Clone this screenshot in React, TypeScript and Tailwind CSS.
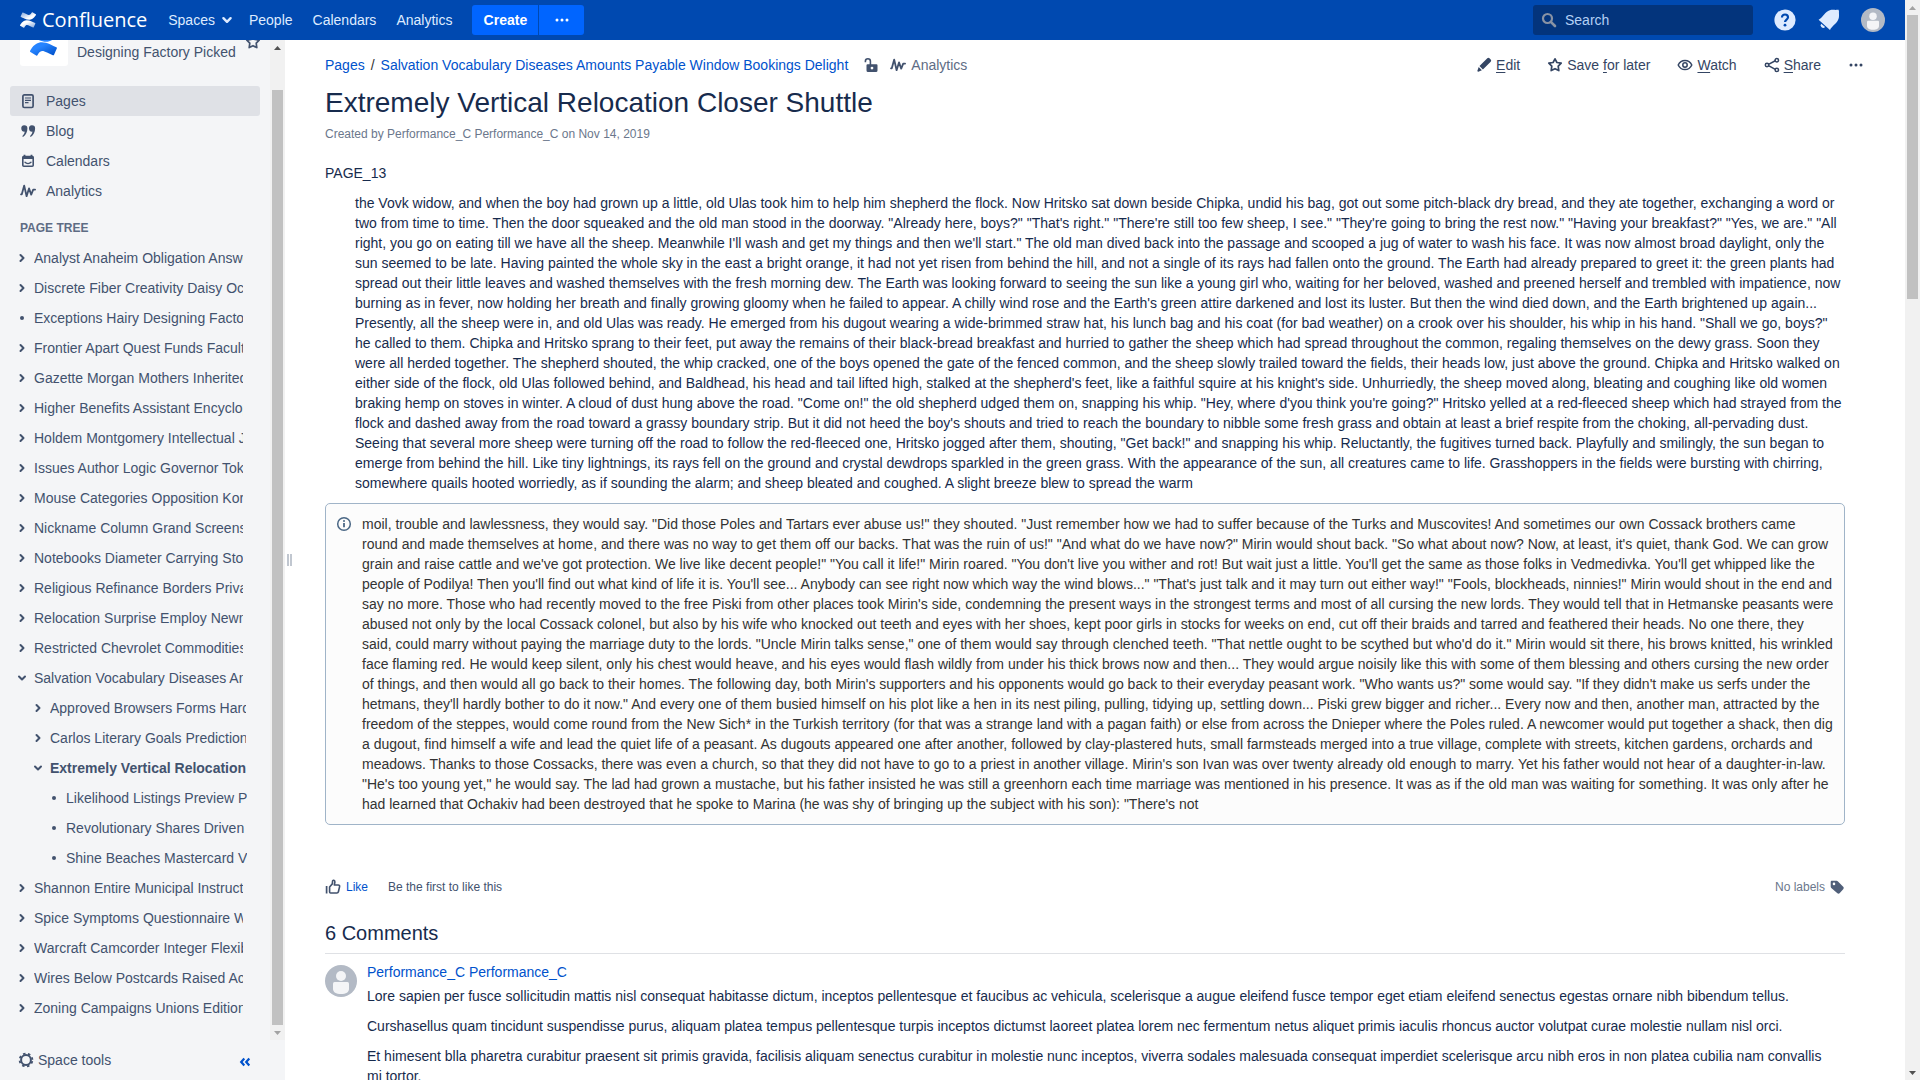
import React from "react";

const LOGO_BOTTOM =
  "M.87 18.257c-.248.382-.53.875-.763 1.245a.764.764 0 0 0 .255 1.04l4.965 3.054a.764.764 0 0 0 1.058-.26c.199-.332.454-.763.733-1.221 1.967-3.247 3.945-2.853 7.508-1.146l4.957 2.337a.764.764 0 0 0 1.028-.382l2.364-5.346a.764.764 0 0 0-.382-1 599.851 599.851 0 0 1-4.965-2.361C10.911 10.97 5.224 11.185.87 18.257z";
const LOGO_TOP =
  "M23.131 5.743c.249-.405.531-.875.764-1.25a.764.764 0 0 0-.256-1.034L18.675.404a.764.764 0 0 0-1.058.26c-.195.335-.451.763-.734 1.225-1.966 3.246-3.945 2.85-7.508 1.146L4.437.694a.764.764 0 0 0-1.027.382L1.046 6.422a.764.764 0 0 0 .382 1c1.039.49 3.104 1.467 4.965 2.361 6.698 3.246 12.392 3.029 16.738-4.04z";

function Logo({ id, from, to, className }: { id: string; from: string; to: string; className: string }) {
  return (
    <svg viewBox="0 0 24 24" className={className} aria-hidden="true">
      <defs>
        <linearGradient id={id + "a"} x1="1" y1="1" x2="0.2" y2="0.2">
          <stop offset="0.1" stopColor={from} />
          <stop offset="0.8" stopColor={to} />
        </linearGradient>
        <linearGradient id={id + "b"} x1="0" y1="0" x2="0.8" y2="0.8">
          <stop offset="0.1" stopColor={from} />
          <stop offset="0.8" stopColor={to} />
        </linearGradient>
      </defs>
      <path d={LOGO_BOTTOM} fill={`url(#${id}a)`} />
      <path d={LOGO_TOP} fill={`url(#${id}b)`} />
    </svg>
  );
}

type IconProps = { className?: string };

function Icon({ className = "size-4", children }: IconProps & { children: React.ReactNode }) {
  return (
    <svg viewBox="0 0 16 16" fill="none" stroke="currentColor" className={`shrink-0 ${className}`} aria-hidden="true">
      {children}
    </svg>
  );
}

const AnalyticsIcon = (p: IconProps) => (
  <Icon {...p}>
    <path d="M1 11.3h.8L4.2 2.6 6.6 13.2 9 5.4l2.2 6.2 2-5h1.9" strokeWidth="1.8" strokeLinejoin="round" strokeLinecap="round" />
  </Icon>
);
const PageIcon = () => (
  <Icon>
    <rect x="2.9" y="1.9" width="10.2" height="12.6" rx="1.4" strokeWidth="1.7" />
    <path d="M5 5h6M5 7.3h6M5 9.6h3.5" strokeWidth="1.2" />
  </Icon>
);
const BlogIcon = () => (
  <Icon>
    <path
      d="M4.2 2.2a3.2 3.2 0 0 1 3.2 3.3c0 3.4-1.6 6.6-4.1 8.2-.7.3-1.2-.5-.7-1 1.3-1.2 2-2.6 2.2-4.1A3.2 3.2 0 1 1 4.2 2.2zM11.9 2.2a3.2 3.2 0 0 1 3.2 3.3c0 3.4-1.6 6.6-4.1 8.2-.7.3-1.2-.5-.7-1 1.3-1.2 2-2.6 2.2-4.1A3.2 3.2 0 1 1 11.9 2.2z"
      fill="currentColor"
      stroke="none"
    />
  </Icon>
);
const CalendarIcon = () => (
  <Icon>
    <rect x="2.8" y="3.5" width="10.4" height="9.7" rx="1" strokeWidth="1.6" />
    <path d="M2.5 4.8h11" strokeWidth="2.4" />
    <path d="M4.5 1.8v2M11.5 1.8v2" strokeWidth="1.8" />
    <path d="M5 9.3c1.5 1.7 4.5 1.7 6 0" strokeWidth="1.3" strokeLinecap="round" />
  </Icon>
);
const StarIcon = (p: IconProps) => (
  <Icon {...p}>
    <path
      d="M8 1.8l1.9 3.7 4.3.7-3 3 .6 4.4L8 11.7l-3.8 1.9.6-4.4-3-3 4.3-.7z"
      strokeWidth="1.7"
      strokeLinejoin="round"
    />
  </Icon>
);
const PencilIcon = () => (
  <Icon>
    <path d="M10.3 2.2l1-.9a1.6 1.6 0 0 1 2.2 0l1.2 1.2a1.6 1.6 0 0 1 0 2.2L6.9 12.5 3.500 9zM2.700 10l3.200 3.200-3.600 1.500c-.6.2-1.100-.3-.9-.9z" fill="currentColor" stroke="none" />
  </Icon>
);
const EyeIcon = () => (
  <Icon>
    <path d="M1.2 8C2.6 5 5.1 3.4 8 3.4S13.4 5 14.8 8c-1.4 3-3.900 4.600-6.800 4.600S2.600 11 1.200 8z" strokeWidth="1.5" strokeLinejoin="round" />
    <circle cx="8" cy="8" r="2.2" strokeWidth="1.5" />
  </Icon>
);
const ShareIcon = () => (
  <Icon>
    <path d="M4.5 7.4l6.8-3.7M4.5 8.6l6.8 3.8" strokeWidth="1.6" />
    <circle cx="3" cy="8" r="1.7" strokeWidth="1.5" />
    <circle cx="12.8" cy="3.2" r="1.7" strokeWidth="1.5" />
    <circle cx="12.8" cy="12.9" r="1.7" strokeWidth="1.5" />
  </Icon>
);
const MoreIcon = () => (
  <Icon>
    <g fill="currentColor" stroke="none">
      <circle cx="3" cy="8" r="1.5" />
      <circle cx="8" cy="8" r="1.5" />
      <circle cx="13" cy="8" r="1.5" />
    </g>
  </Icon>
);
const UnlockIcon = () => (
  <Icon>
    <path fillRule="evenodd" d="M4.5 7.2h9a1 1 0 0 1 1 1v5.3a1.5 1.5 0 0 1-1.5 1.5H5a1.5 1.5 0 0 1-1.5-1.5V8.2a1 1 0 0 1 1-1zM9 9.7a1.4 1.4 0 1 0 0 2.8 1.4 1.4 0 0 0 0-2.8z" fill="currentColor" stroke="none" />
    <path d="M2.4 5.3V4.2a2.5 2.5 0 0 1 5 0V8" strokeWidth="1.6" />
  </Icon>
);
const SearchIcon = () => (
  <Icon>
    <circle cx="6.5" cy="6.5" r="4.5" strokeWidth="2.2" />
    <path d="M9.8 9.8l4.2 4.2" strokeWidth="2.6" strokeLinecap="round" />
  </Icon>
);
const LikeIcon = () => (
  <Icon>
    <path d="M1.6 7v7.5" strokeWidth="1.7" />
    <path d="M4.6 13V8l2.7-3.1.3-3c.1-1 2.3-.9 2.3 1.1L9.3 6h4c1 0 1.5.7 1.3 1.6l-1.2 5.2c-.2.8-.7 1.2-1.5 1.2H5.6a1 1 0 0 1-1-1z" strokeWidth="1.6" strokeLinejoin="round" />
  </Icon>
);
const TagIcon = () => (
  <Icon>
    <path fillRule="evenodd" d="M2.8 1.8h4.8c.5 0 1 .2 1.4.6l5.2 5.4c.7.7.7 1.7 0 2.4l-3.4 3.9c-.7.7-1.7.7-2.4.1L2.3 8.9a2 2 0 0 1-.6-1.4V2.9c0-.6.5-1.1 1.1-1.1zM5 3.6a1.3 1.3 0 1 0 0 2.6 1.3 1.3 0 0 0 0-2.6z" fill="currentColor" stroke="none" />
  </Icon>
);
const InfoIcon = () => (
  <Icon>
    <circle cx="8" cy="8" r="6.3" strokeWidth="1.5" />
    <path d="M8 7v4.2" strokeWidth="1.8" />
    <circle cx="8" cy="4.9" r="1" fill="currentColor" stroke="none" />
  </Icon>
);
const GearIcon = () => (
  <Icon>
    <circle cx="8" cy="8" r="4.9" strokeWidth="2" />
    <circle cx="8" cy="8" r="6.4" strokeWidth="1.8" strokeDasharray="2.5 2.526" strokeDashoffset="3.8" />
  </Icon>
);
const CollapseIcon = () => (
  <Icon>
    <path d="M7.3 4.5L4.2 8l3.1 3.5M12.300 4.500L9.200 8l3.100 3.500" strokeWidth="2.2" />
  </Icon>
);

function Chevron({ open, className = "size-2.5" }: { open?: boolean; className?: string }) {
  return (
    <svg viewBox="0 0 10 10" fill="none" stroke="currentColor" strokeWidth="2" strokeLinecap="round" strokeLinejoin="round" className={`shrink-0 ${className}`} aria-hidden="true">
      <path d={open ? "M2 3.5l3 3 3-3" : "M3.5 2l3 3-3 3"} />
    </svg>
  );
}

function Avatar({ className }: { className: string }) {
  return (
    <svg viewBox="0 0 32 32" className={`shrink-0 ${className}`} role="img" aria-label="Performance_C">
      <circle cx="16" cy="16" r="16" fill="#b3bac5" />
      <circle cx="16" cy="11" r="5" fill="#f4f5f7" />
      <path d="M8 18.5a1.5 1.5 0 0 1 1.5-1.5h13a1.5 1.5 0 0 1 1.5 1.5V24c0 3-3 5-8 5s-8-2-8-5z" fill="#f4f5f7" />
    </svg>
  );
}

function Scrollbar({ thumb, upOn, downOn }: { thumb: string; upOn: boolean; downOn: boolean }) {
  return (
    <div className="flex w-[15px] shrink-0 flex-col bg-[#f1f1f1]" aria-hidden="true">
      <svg viewBox="0 0 15 15" className="size-[15px] shrink-0" fill={upOn ? "#505050" : "#a3a3a3"}>
        <path d="M7.5 6L11 10H4z" />
      </svg>
      <div className="flex min-h-0 flex-1 flex-col px-[2px]">
        <div className={`bg-[#c1c1c1] ${thumb}`} />
      </div>
      <svg viewBox="0 0 15 15" className="size-[15px] shrink-0" fill={downOn ? "#505050" : "#a3a3a3"}>
        <path d="M7.5 10L4 6h7z" />
      </svg>
    </div>
  );
}

function TopBar() {
  return (
    <header className="flex h-10 shrink-0 items-center bg-[#0049b0] pl-5 pr-5 text-[#deebff]">
      <a href="#home" className="flex items-center gap-1.5 text-white">
        <Logo id="top" from="#8fb0e0" to="#ffffff" className="size-4" />
        <span className="font-['Open_Sans',sans-serif] text-[20px] leading-10">Confluence</span>
      </a>
      <nav className="ml-[21px] flex items-center gap-5">
        <a href="#spaces" className="flex items-center gap-1.5">
          Spaces
          <Chevron open className="size-3" />
        </a>
        <a href="#people" className="-ml-1">People</a>
        <a href="#calendars">Calendars</a>
        <a href="#analytics">Analytics</a>
      </nav>
      <div className="ml-5 flex gap-px">
        <button className="h-[30px] w-[66px] rounded-l-[3px] bg-[#0065ff] font-bold text-white">Create</button>
        <button className="flex h-[30px] w-[45px] items-center justify-center rounded-r-[3px] bg-[#0065ff] text-white" aria-label="More create options">
          <MoreIcon />
        </button>
      </div>
      <label className="ml-auto flex h-[30px] w-[220px] items-center gap-2 rounded-[3px] bg-[#03347c] px-2 text-[#8993a4]">
        <SearchIcon />
        <input type="text" aria-label="Search" placeholder="Search" className="w-full min-w-0 bg-transparent outline-none placeholder:text-[#b3d0f5]" />
      </label>
      <div className="ml-5 flex items-center gap-5">
        <button aria-label="Help">
          <svg viewBox="0 0 24 24" className="size-6">
            <circle cx="12" cy="12" r="10.6" fill="#deebff" />
            <path d="M9 9.4c0-1.8 1.3-2.9 3-2.9s3 1.1 3 2.7c0 2.3-3 2.4-3 4.9" fill="none" stroke="#0049b0" strokeWidth="2.2" />
            <circle cx="12" cy="17.2" r="1.4" fill="#0049b0" />
          </svg>
        </button>
        <button aria-label="Notifications">
          <svg viewBox="0 0 24 24" className="size-6" fill="#deebff">
            <path d="M1.6 11.7C6 9.5 8 3 13.5 1.9c2.5-.5 5 .3 6.5-.1h1.600l.4 1.700c-.3 1.500.4 4-.2 6.400-1.200 5.300-6.600 7.300-8.800 12z" />
            <path d="M4.2 15.8a2.4 2.4 0 1 0 3.9 3.2z" />
          </svg>
        </button>
        <button aria-label="Your profile"><Avatar className="size-6" /></button>
      </div>
    </header>
  );
}

type Node = { t: string; l?: number; open?: boolean; leaf?: boolean; current?: boolean };

const TREE: Node[] = [
  { t: "Analyst Anaheim Obligation Answers" },
  { t: "Discrete Fiber Creativity Daisy Occasional" },
  { t: "Exceptions Hairy Designing Factory Picked", leaf: true },
  { t: "Frontier Apart Quest Funds Faculty" },
  { t: "Gazette Morgan Mothers Inherited" },
  { t: "Higher Benefits Assistant Encyclopedia" },
  { t: "Holdem Montgomery Intellectual Jungle" },
  { t: "Issues Author Logic Governor Tokyo" },
  { t: "Mouse Categories Opposition Korean" },
  { t: "Nickname Column Grand Screenshots" },
  { t: "Notebooks Diameter Carrying Stories" },
  { t: "Religious Refinance Borders Private" },
  { t: "Relocation Surprise Employ Newman" },
  { t: "Restricted Chevrolet Commodities" },
  { t: "Salvation Vocabulary Diseases Amounts", open: true },
  { t: "Approved Browsers Forms Hardware", l: 1 },
  { t: "Carlos Literary Goals Predictions", l: 1 },
  { t: "Extremely Vertical Relocation Closer", l: 1, open: true, current: true },
  { t: "Likelihood Listings Preview Payment", l: 2, leaf: true },
  { t: "Revolutionary Shares Driven Mail", l: 2, leaf: true },
  { t: "Shine Beaches Mastercard Visa", l: 2, leaf: true },
  { t: "Shannon Entire Municipal Instruct" },
  { t: "Spice Symptoms Questionnaire With" },
  { t: "Warcraft Camcorder Integer Flexible" },
  { t: "Wires Below Postcards Raised Acids" },
  { t: "Zoning Campaigns Unions Editions" },
];

const INDENT = ["pl-[17px] pr-[27px]", "pl-[33px] pr-6", "pl-[49px] pr-[23px]"];

function SideBar() {
  const links = [
    { t: "Pages", icon: <PageIcon />, on: true },
    { t: "Blog", icon: <BlogIcon /> },
    { t: "Calendars", icon: <CalendarIcon /> },
    { t: "Analytics", icon: <AnalyticsIcon /> },
  ];
  return (
    <aside className="flex w-[285px] shrink-0 flex-col bg-[#f4f5f7] text-[#42526e]">
      <div className="flex min-h-0 flex-1">
        <div className="min-w-0 flex-1 overflow-hidden">
          <div className="-mt-[22px] flex h-12 items-center gap-[9px] pl-5">
            <div className="flex size-12 shrink-0 items-center justify-center rounded-[3px] bg-white">
              <Logo id="side" from="#0052cc" to="#2684ff" className="size-7" />
            </div>
            <a href="#space" className="mt-5 whitespace-nowrap leading-5">Designing Factory Picked</a>
            <button aria-label="Favourite space"><StarIcon /></button>
          </div>
          <ul className="mt-5 px-2.5">
            {links.map((k) => (
              <li key={k.t}>
                <a href={"#" + k.t} className={`flex h-[30px] items-center gap-2.5 rounded-[3px] pl-2.5 ${k.on ? "bg-[#dfe1e6]" : ""}`}>
                  {k.icon}
                  {k.t}
                </a>
              </li>
            ))}
          </ul>
          <h2 className="mt-3 pl-5 text-[12px] font-bold leading-[20px] text-[#5e6c84]">PAGE TREE</h2>
          <ul className="mt-[5px]">
            {TREE.map((n) => (
              <li key={n.t} className={`flex h-[30px] items-center gap-[7px] ${INDENT[n.l ?? 0]}`}>
                {n.leaf ? (
                  <span className="flex size-2.5 shrink-0 items-center justify-center"><span className="size-1 rounded-full bg-[#42526e]" /></span>
                ) : (
                  <button aria-label={n.open ? "Collapse" : "Expand"}><Chevron open={n.open} /></button>
                )}
                <a href="#page" className={`min-w-0 flex-1 overflow-hidden whitespace-nowrap ${n.current ? "font-bold" : ""}`}>{n.t}</a>
              </li>
            ))}
          </ul>
        </div>
        <Scrollbar thumb="mt-[35px] flex-1" upOn downOn={false} />
      </div>
      <div className="flex h-10 shrink-0 items-center justify-between pl-[18px] pr-8">
        <button className="flex items-center gap-1"><GearIcon />Space tools</button>
        <button className="mt-1 text-[#0052cc]" aria-label="Collapse sidebar"><CollapseIcon /></button>
      </div>
    </aside>
  );
}

function Tool({ icon, pre = "", k, rest }: { icon: React.ReactNode; pre?: string; k: string; rest: string }) {
  return (
    <button className="flex items-center gap-1 whitespace-nowrap">
      {icon}
      <span>{pre}<u className="underline-offset-2">{k}</u>{rest}</span>
    </button>
  );
}

const STORY =
  `the Vovk widow, and when the boy had grown up a little, old Ulas took him to help him shepherd the flock. Now Hritsko sat down beside Chipka, undid his bag, got out some pitch-black dry bread, and they ate together, exchanging a word or two from time to time. Then the door squeaked and the old man stood in the doorway. "Already here, boys?" "That's right." "There're still too few sheep, I see." "They're going to bring the rest now." "Having your breakfast?" "Yes, we are." "All right, you go on eating till we have all the sheep. Meanwhile I'll wash and get my things and then we'll start." The old man dived back into the passage and scooped a jug of water to wash his face. It was now almost broad daylight, only the sun seemed to be late. Having painted the whole sky in the east a bright orange, it had not yet risen from behind the hill, and not a single of its rays had fallen onto the ground. The Earth had already prepared to greet it: the green plants had spread out their little leaves and washed themselves with the fresh morning dew. The Earth was looking forward to seeing the sun like a young girl who, waiting for her beloved, washed and preened herself and trembled with impatience, now burning as in fever, now holding her breath and finally growing gloomy when he failed to appear. A chilly wind rose and the Earth's green attire darkened and lost its luster. But then the wind died down, and the Earth brightened up again... Presently, all the sheep were in, and old Ulas was ready. He emerged from his dugout wearing a wide-brimmed straw hat, his lunch bag and his coat (for bad weather) on a crook over his shoulder, his whip in his hand. "Shall we go, boys?" he called to them. Chipka and Hritsko sprang to their feet, put away the remains of their black-bread breakfast and hurried to gather the sheep which had spread throughout the common, regaling themselves on the dewy grass. Soon they were all herded together. The shepherd shouted, the whip cracked, one of the boys opened the gate of the fenced common, and the sheep slowly trailed toward the fields, their heads low, just above the ground. Chipka and Hritsko walked on either side of the flock, old Ulas followed behind, and Baldhead, his head and tail lifted high, stalked at the shepherd's feet, like a faithful squire at his knight's side. Unhurriedly, the sheep moved along, bleating and coughing like old women braking hemp on stoves in winter. A cloud of dust hung above the road. "Come on!" the old shepherd udged them on, snapping his whip. "Hey, where d'you think you're going?" Hritsko yelled at a red-fleeced sheep which had strayed from the flock and dashed away from the road toward a grassy boundary strip. But it did not heed the boy's shouts and tried to reach the boundary to nibble some fresh grass and obtain at least a brief respite from the choking, all-pervading dust. Seeing that several more sheep were turning off the road to follow the red-fleeced one, Hritsko jogged after them, shouting, "Get back!" and snapping his whip. Reluctantly, the fugitives turned back. Playfully and smilingly, the sun began to emerge from behind the hill. Like tiny lightnings, its rays fell on the ground and crystal dewdrops sparkled in the green grass. With the appearance of the sun, all creatures came to life. Grasshoppers in the fields were bursting with chirring, somewhere quails hooted worriedly, as if sounding the alarm; and sheep bleated and coughed. A slight breeze blew to spread the warm`;

const NOTE =
  `moil, trouble and lawlessness, they would say. "Did those Poles and Tartars ever abuse us!" they shouted. "Just remember how we had to suffer because of the Turks and Muscovites! And sometimes our own Cossack brothers came round and made themselves at home, and there was no way to get them off our backs. That was the ruin of us!" "And what do we have now?" Mirin would shout back. "So what about now? Now, at least, it's quiet, thank God. We can grow grain and raise cattle and we've got protection. We live like decent people!" "You call it life!" Mirin roared. "You don't live you wither and rot! But wait just a little. You'll get the same as those folks in Vedmedivka. You'll get whipped like the people of Podilya! Then you'll find out what kind of life it is. You'll see... Anybody can see right now which way the wind blows..." "That's just talk and it may turn out either way!" "Fools, blockheads, ninnies!" Mirin would shout in the end and say no more. Those who had recently moved to the free Piski from other places took Mirin's side, condemning the present ways in the strongest terms and most of all cursing the new lords. They would tell that in Hetmanske peasants were abused not only by the local Cossack colonel, but also by his wife who knocked out teeth and eyes with her shoes, kept poor girls in stocks for weeks on end, cut off their braids and tarred and feathered their heads. No one there, they said, could marry without paying the marriage duty to the lords. "Uncle Mirin talks sense," one of them would say through clenched teeth. "That nettle ought to be scythed but who'd do it." Mirin would sit there, his brows knitted, his wrinkled face flaming red. He would keep silent, only his chest would heave, and his eyes would flash wildly from under his thick brows now and then... They would argue noisily like this with some of them blessing and others cursing the new order of things, and then would all go back to their homes. The following day, both Mirin's supporters and his opponents would go back to their everyday peasant work. "Who wants us?" some would say. "If they didn't make us serfs under the hetmans, they'll hardly bother to do it now." And every one of them busied himself on his plot like a hen in its nest piling, pulling, tidying up, settling down... Piski grew bigger and richer... Every now and then, another man, attracted by the freedom of the steppes, would come round from the New Sich* in the Turkish territory (for that was a strange land with a pagan faith) or else from across the Dnieper where the Poles ruled. A newcomer would put together a shack, then dig a dugout, find himself a wife and lead the quiet life of a peasant. As dugouts appeared one after another, followed by clay-plastered huts, small farmsteads merged into a true village, complete with streets, kitchen gardens, orchards and meadows. Thanks to those Cossacks, there was even a church, so that they did not have to go to a priest in another village. Mirin's son Ivan was over twenty already old enough to marry. Yet his father would not hear of a daughter-in-law. "He's too young yet," he would say. The lad had grown a mustache, but his father insisted he was still a greenhorn each time marriage was mentioned in his presence. It was as if the old man was waiting for something. It was only after he had learned that Ochakiv had been destroyed that he spoke to Marina (he was shy of bringing up the subject with his son): "There's not`;

const COMMENTS = [
  "Lore sapien per fusce sollicitudin mattis nisl consequat habitasse dictum, inceptos pellentesque et faucibus ac vehicula, scelerisque a augue eleifend fusce tempor eget etiam eleifend senectus egestas ornare nibh bibendum tellus.",
  "Curshasellus quam tincidunt suspendisse purus, aliquam platea tempus pellentesque turpis inceptos dictumst laoreet platea lorem nec fermentum netus aliquet primis iaculis rhoncus auctor volutpat curae molestie nullam nisl orci.",
  "Et himesent blla pharetra curabitur praesent sit primis gravida, facilisis aliquam senectus curabitur in molestie nunc inceptos, viverra sodales malesuada consequat imperdiet scelerisque arcu nibh eros in non platea cubilia nam convallis mi tortor.",
];

function Content() {
  return (
    <main className="min-w-0 flex-1 overflow-hidden pl-[31px] pr-[60px]">
      <div className="mt-[15px] -mr-[19px] flex h-5 items-center justify-between">
        <div className="flex items-center">
          <nav className="flex gap-1.5" aria-label="Breadcrumb">
            <a href="#pages" className="text-[#0052cc]">Pages</a>
            <span className="text-[#333333]">/</span>
            <a href="#parent" className="text-[#0052cc]">Salvation Vocabulary Diseases Amounts Payable Window Bookings Delight</a>
          </nav>
          <button className="ml-[15px] text-[#42526e]" aria-label="Unrestricted"><UnlockIcon /></button>
          <button className="ml-[11px] flex items-center gap-[5px] text-[#5e6c84]"><span className="text-[#42526e]"><AnalyticsIcon /></span>Analytics</button>
        </div>
        <div className="flex items-center gap-[27px] text-[#344563]">
          <Tool icon={<PencilIcon />} k="E" rest="dit" />
          <Tool icon={<StarIcon />} pre="Save " k="f" rest="or later" />
          <Tool icon={<EyeIcon />} k="W" rest="atch" />
          <Tool icon={<ShareIcon />} k="S" rest="hare" />
          <button aria-label="More actions"><MoreIcon /></button>
        </div>
      </div>
      <h1 className="mt-3 text-[28px] leading-8">Extremely Vertical Relocation Closer Shuttle</h1>
      <p className="mt-[5px] text-[12px] leading-5 text-[#6b778c]">Created by Performance_C Performance_C on Nov 14, 2019</p>
      <p className="mt-[19px] leading-5">PAGE_13</p>
      <p className="mt-2.5 pl-[30px] leading-5">{STORY}</p>
      <div className="mt-2.5 flex gap-2.5 rounded-[5px] border border-[#a0b4c8] bg-[#fcfcfc] py-2.5 pl-2.5 pr-2.5 text-[#333333]">
        <span className="flex h-5 items-center text-[#4a6785]"><InfoIcon /></span>
        <p className="min-w-0 flex-1 leading-5">{NOTE}</p>
      </div>
      <div className="mt-[52px] flex h-5 items-center text-[12px] text-[#42526e]">
        <button className="flex items-center gap-[5px]"><LikeIcon /><span className="text-[#0052cc]">Like</span></button>
        <span className="ml-5">Be the first to like this</span>
        <span className="ml-auto flex items-center gap-1 text-[#6b778c]">
          No labels
          <button className="text-[#505f79]" aria-label="Edit labels"><TagIcon /></button>
        </span>
      </div>
      <h2 className="mt-6 border-b border-[#dfe1e5] pb-2 text-[20px] leading-6">6 Comments</h2>
      <div className="mt-2 flex gap-2.5 pr-2.5">
        <Avatar className="mt-[3px] size-8" />
        <div className="min-w-0 flex-1 leading-5">
          <a href="#author" className="block text-[#0052cc]">Performance_C Performance_C</a>
          <div className="mt-1 flex flex-col gap-2.5">
            {COMMENTS.map((c) => (
              <p key={c}>{c}</p>
            ))}
          </div>
        </div>
      </div>
    </main>
  );
}

export default function App() {
  return (
    <div className="flex h-screen overflow-hidden bg-white font-['Liberation_Sans',Arial,sans-serif] text-[14px] leading-5 text-[#172b4d]">
      <div className="flex min-w-0 flex-1 flex-col">
        <TopBar />
        <div className="flex min-h-0 flex-1">
          <SideBar />
          <div className="flex w-[9px] shrink-0 items-center justify-center gap-px" aria-hidden="true">
            <span className="h-3 w-[2px] bg-[#c1c7d0]" />
            <span className="h-3 w-[2px] bg-[#c1c7d0]" />
          </div>
          <Content />
        </div>
      </div>
      <Scrollbar thumb="h-[27%]" upOn={false} downOn />
    </div>
  );
}
